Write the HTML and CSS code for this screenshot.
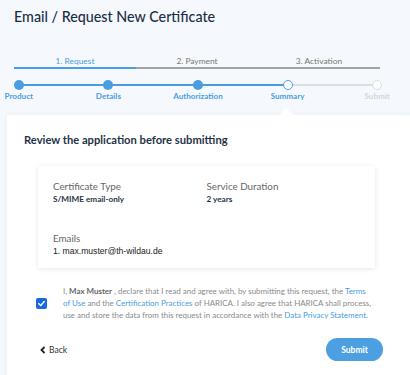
FILE: index.html
```html
<!DOCTYPE html>
<html lang="en">

<head>
    <meta charset="UTF-8" />
    <title>Email / Request New Certificate</title>
    <link rel="stylesheet" href="styles.css">
</head>

<body>

    <h1 class="page-title">Email / Request New Certificate</h1>

    <div class="phases">
        <div class="phase active">1. Request</div>
        <div class="phase">2. Payment</div>
        <div class="phase">3. Activation</div>
    </div>

    <div class="steps">
        <div class="step done"><span class="dot"></span><span class="step-label">Product</span></div>
        <div class="step done"><span class="dot"></span><span class="step-label">Details</span></div>
        <div class="step done"><span class="dot"></span><span class="step-label">Authorization</span></div>
        <div class="step current"><span class="dot"></span><span class="step-label">Summary</span></div>
        <div class="step todo"><span class="dot"></span><span class="step-label">Submit</span></div>
    </div>

    <div class="card">
        <h2 class="card-title">Review the application before submitting</h2>

        <div class="summary">
            <div class="field">
                <div class="field-label">Certificate Type</div>
                <div class="field-value">S/MIME email-only</div>
            </div>
            <div class="field">
                <div class="field-label">Service Duration</div>
                <div class="field-value">2 years</div>
            </div>
            <div class="field">
                <div class="field-label">Emails</div>
                <div class="field-value mono">1. max.muster@th-wildau.de</div>
            </div>
        </div>

        <div class="consent">
            <span class="checkbox">
                <svg width="9" height="9" viewBox="0 0 10 10">
                    <path d="M2 5.2 L4.2 7.3 L8 2.8" fill="none" stroke="#fff" stroke-width="1.7" stroke-linecap="round" stroke-linejoin="round" />
                </svg>
            </span>
            <p class="consent-text">
                I, <b>Max Muster</b> , declare that I read and agree with, by submitting this request, the
                <a href="#">Terms of Use</a> and the <a href="#">Certification Practices</a> of HARICA. I also
                agree that HARICA shall process, use and store the data from this request in accordance with
                the <a href="#">Data Privacy Statement</a>.
            </p>
        </div>

        <div class="actions">
            <a class="back" href="#">
                <svg width="6" height="8" viewBox="0 0 6 8">
                    <path d="M4.5 1 L1.5 4 L4.5 7" fill="none" stroke="#222" stroke-width="1.8" />
                </svg>
                Back
            </a>
            <button class="submit">Submit</button>
        </div>
    </div>

</body>

</html>
```

FILE: styles.css
```css
html,
body {
    overflow: hidden;
}

body {
    margin: 0;
    background: #f5f9fd;
    font-family: Lato, "Open Sans", sans-serif;
    color: #1f3347;
}

.page-title {
    margin: 0;
    padding: 7px 14px 0;
    font-size: 14.3px;
    line-height: 20px;
    font-weight: 500;
    color: #1b2d44;
}

/* phase bar */
.phases {
    display: flex;
    margin: 28px 0 0 14px;
    width: 366px;
}

.phase {
    flex: 1;
    text-align: center;
    font-size: 8.4px;
    line-height: 12px;
    color: #777;
    border-bottom: 2px solid #a3a3a3;
}

.phase.active {
    color: #4a9de0;
    border-bottom-color: #4a9de0;
}

/* step dots */
.steps {
    display: flex;
    margin: 11px 0 0 -26px;
    width: 448px;
}

.step {
    flex: 1;
    position: relative;
    display: flex;
    flex-direction: column;
    align-items: center;
}

.step+.step::before {
    content: "";
    position: absolute;
    top: 4px;
    left: -50%;
    right: 50%;
    height: 2px;
    background: #4a9de0;
}

.step.todo::before {
    background: #d9dee3;
}

.dot {
    position: relative;
    z-index: 1;
    width: 10px;
    height: 10px;
    border-radius: 50%;
    box-sizing: border-box;
    background: #4a9de0;
}

.step.current .dot {
    background: #fff;
    border: 1.5px solid #4a9de0;
}

.step.todo .dot {
    background: #fff;
    border: 1.5px solid #d9dee3;
}

.step-label {
    font-size: 8.1px;
    line-height: 12px;
    font-weight: bold;
    color: #4a9de0;
}

.step.todo .step-label {
    color: #cfd6dd;
}

/* card */
.card {
    position: relative;
    margin: 13px 0 0 7px;
    width: 420px;
    padding: 17px 0 20px 17px;
    background: #fff;
    box-shadow: 0 0 6px rgba(30, 60, 100, 0.06);
}

.card::before {
    content: "";
    position: absolute;
    top: -7px;
    left: 272px;
    border-left: 7px solid transparent;
    border-right: 7px solid transparent;
    border-bottom: 7px solid #fff;
}

.card-title {
    margin: 0;
    font-size: 11.2px;
    line-height: 16px;
    font-weight: bold;
    color: #1f3347;
}

.summary {
    display: grid;
    grid-template-columns: 1fr 1fr;
    row-gap: 26px;
    width: 307px;
    margin: 18px 0 0 14px;
    padding: 13px 15px 11px;
    background: #fff;
    box-shadow: 0 1px 5px rgba(0, 0, 0, 0.1);
}

.field-label {
    font-size: 9.8px;
    line-height: 14px;
    color: #666;
}

.field-value {
    font-size: 8.2px;
    line-height: 12px;
    font-weight: bold;
    color: #1f3347;
}

.field-value.mono {
    font-family: "Liberation Sans", Arial, sans-serif;
    font-size: 8.6px;
    font-weight: normal;
    color: #222;
}

/* consent */
.consent {
    display: flex;
    align-items: center;
    gap: 16px;
    margin: 17px 0 0 12px;
}

.checkbox {
    flex: none;
    width: 11px;
    height: 11px;
    border-radius: 2px;
    background: #1668e3;
    display: flex;
    align-items: center;
    justify-content: center;
}

.consent-text {
    margin: 0;
    width: 309px;
    font-size: 7.95px;
    line-height: 12px;
    color: #8a8a8a;
}

.consent-text b {
    color: #666;
}

.consent-text a {
    color: #4a9de0;
    text-decoration: none;
}

/* actions */
.actions {
    display: flex;
    justify-content: space-between;
    align-items: center;
    width: 343px;
    margin: 17px 0 0 16px;
}

.back {
    display: flex;
    align-items: center;
    gap: 3px;
    font-size: 8.5px;
    color: #333;
    text-decoration: none;
}

.submit {
    width: 57px;
    height: 23px;
    border: none;
    border-radius: 12px;
    background: #4c9fe0;
    color: #fff;
    font-family: inherit;
    font-size: 8.5px;
    font-weight: bold;
}
```
